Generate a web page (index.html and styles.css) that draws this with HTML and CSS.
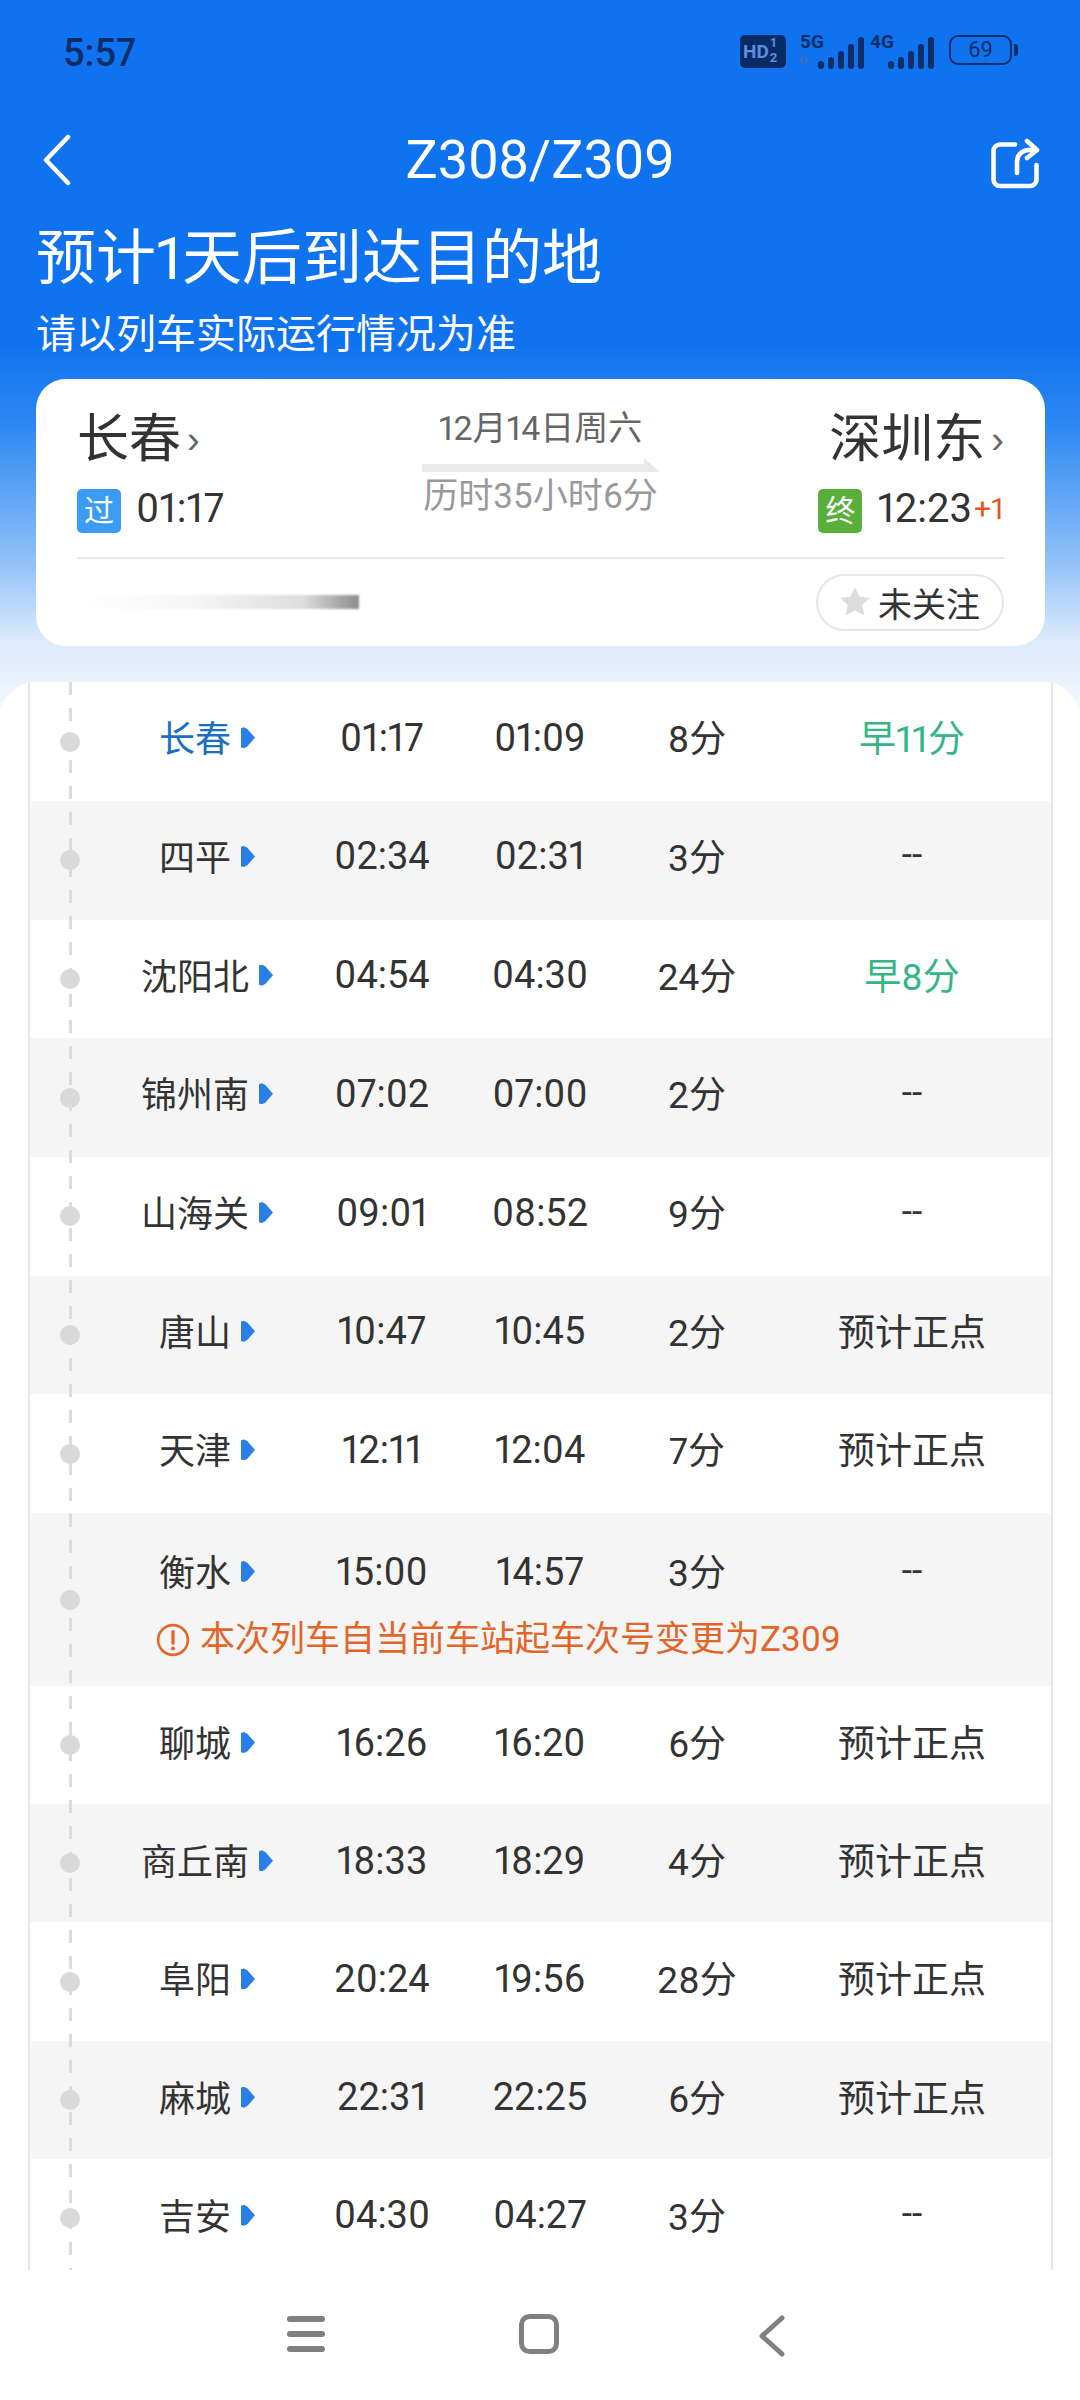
FILE: index.html
```html
<!DOCTYPE html>
<html lang="zh">
<head>
<meta charset="utf-8">
<title>Z308/Z309</title>
<link rel="stylesheet" href="styles.css">
</head>
<body>
<div class="page">
  <header class="hero">
    <div class="status">
      <span class="clock">5:57</span>
      <div class="sys">
        <span class="hd">HD<span class="hd-n"><i>1</i><i>2</i></span></span>
        <span class="net"><b>5G</b><svg width="46" height="34" viewBox="0 0 46 34"><path d="M-15 21l-5 4 5 4zM-13 21l5 4-5 4z" fill="#3f6fc0"/><path d="M3 29v2M13 25v6M23 19v12M33 12v19M43 5v26" class="bars"/></svg></span>
        <span class="net"><b>4G</b><svg width="46" height="34" viewBox="0 0 46 34"><path d="M3 29v2M13 25v6M23 19v12M33 12v19M43 5v26" class="bars"/></svg></span>
        <span class="batt"><span class="batt-b">69</span><span class="batt-n"></span></span>
      </div>
    </div>
    <nav class="bar">
      <svg class="back" width="34" height="52" viewBox="0 0 34 52"><path d="M29 3 7 26l22 23" fill="none" stroke="#fff" stroke-width="4.5" stroke-linecap="round" stroke-linejoin="round"/></svg>
      <h1 class="title">Z308/Z309</h1>
      <svg class="share" width="52" height="60" viewBox="0 0 52 60"><path d="M26 14.5H11a6.5 6.5 0 0 0-6.5 6.5v28.5a6.5 6.5 0 0 0 6.5 6.5h30a6.5 6.5 0 0 0 6.5-6.5V35" fill="none" stroke="#fff" stroke-width="4.6" stroke-linecap="round"/><path d="M28 43V32c0-7 5-12 12-12h7M38 11l10 9-10 8" fill="none" stroke="#fff" stroke-width="4.6" stroke-linecap="round" stroke-linejoin="round"/></svg>
    </nav>
    <h2 class="eta">预计1天后到达目的地</h2>
    <p class="hint">请以列车实际运行情况为准</p>
    <section class="card">
      <div class="route">
        <div class="end">
          <div class="city">长春<span class="chev">›</span></div>
          <div class="at"><span class="tag tag-pass">过</span><span class="tm">01:17</span></div>
        </div>
        <div class="mid">
          <div class="date">12月14日周六</div>
          <svg class="arrow" width="238" height="14" viewBox="0 0 238 14"><path d="M0 6h222V0l16 14H0z" fill="#e9e9e9"/></svg>
          <div class="dur">历时35小时6分</div>
        </div>
        <div class="end end-r">
          <div class="city">深圳东<span class="chev">›</span></div>
          <div class="at"><span class="tag tag-end">终</span><span class="tm">12:23</span><span class="plus">+1</span></div>
        </div>
      </div>
      <div class="foot">
        <div class="smear"></div>
        <div class="pill"><svg width="34" height="34" viewBox="0 0 24 24"><path d="M12 1.5l3.2 6.8 7.3.9-5.4 5 1.5 7.3-6.6-3.7-6.6 3.7 1.5-7.3-5.4-5 7.3-.9z" fill="#dcdcdc"/></svg><span>未关注</span></div>
      </div>
    </section>
  </header>

  <main class="sheet">
    <div class="table">
      <div class="row"><span class="node"></span><div class="cells"><span class="stn cur">长春<i class="tri"></i></span><span>01:17</span><span>01:09</span><span>8分</span><span class="early">早11分</span></div></div>
      <div class="row alt"><span class="node"></span><div class="cells"><span class="stn">四平<i class="tri"></i></span><span>02:34</span><span>02:31</span><span>3分</span><span>--</span></div></div>
      <div class="row"><span class="node"></span><div class="cells"><span class="stn">沈阳北<i class="tri"></i></span><span>04:54</span><span>04:30</span><span>24分</span><span class="early">早8分</span></div></div>
      <div class="row alt"><span class="node"></span><div class="cells"><span class="stn">锦州南<i class="tri"></i></span><span>07:02</span><span>07:00</span><span>2分</span><span>--</span></div></div>
      <div class="row"><span class="node"></span><div class="cells"><span class="stn">山海关<i class="tri"></i></span><span>09:01</span><span>08:52</span><span>9分</span><span>--</span></div></div>
      <div class="row alt"><span class="node"></span><div class="cells"><span class="stn">唐山<i class="tri"></i></span><span>10:47</span><span>10:45</span><span>2分</span><span>预计正点</span></div></div>
      <div class="row"><span class="node"></span><div class="cells"><span class="stn">天津<i class="tri"></i></span><span>12:11</span><span>12:04</span><span>7分</span><span>预计正点</span></div></div>
      <div class="row alt row-note"><span class="node"></span><div class="cells"><span class="stn">衡水<i class="tri"></i></span><span>15:00</span><span>14:57</span><span>3分</span><span>--</span></div>
        <div class="note"><svg width="34" height="34" viewBox="0 0 32 32"><circle cx="16" cy="16" r="14" fill="none" stroke="#e2662a" stroke-width="2.4"/><path d="M16 8v11" stroke="#e2662a" stroke-width="3" stroke-linecap="round"/><circle cx="16" cy="24" r="1.9" fill="#e2662a"/></svg><span>本次列车自当前车站起车次号变更为Z309</span></div>
      </div>
      <div class="row"><span class="node"></span><div class="cells"><span class="stn">聊城<i class="tri"></i></span><span>16:26</span><span>16:20</span><span>6分</span><span>预计正点</span></div></div>
      <div class="row alt"><span class="node"></span><div class="cells"><span class="stn">商丘南<i class="tri"></i></span><span>18:33</span><span>18:29</span><span>4分</span><span>预计正点</span></div></div>
      <div class="row"><span class="node"></span><div class="cells"><span class="stn">阜阳<i class="tri"></i></span><span>20:24</span><span>19:56</span><span>28分</span><span>预计正点</span></div></div>
      <div class="row alt"><span class="node"></span><div class="cells"><span class="stn">麻城<i class="tri"></i></span><span>22:31</span><span>22:25</span><span>6分</span><span>预计正点</span></div></div>
      <div class="row"><span class="node"></span><div class="cells"><span class="stn">吉安<i class="tri"></i></span><span>04:30</span><span>04:27</span><span>3分</span><span>--</span></div></div>
    </div>
  </main>

  <footer class="navbar">
    <svg width="40" height="40" viewBox="0 0 40 40"><path d="M4 5h32M4 20h32M4 35h32" stroke="#808080" stroke-width="6" stroke-linecap="round"/></svg>
    <svg width="40" height="40" viewBox="0 0 40 40"><rect x="2.5" y="2.5" width="35" height="35" rx="8" fill="none" stroke="#808080" stroke-width="5"/></svg>
    <svg width="40" height="44" viewBox="0 0 40 44"><path d="M30 4 10 22l20 18" fill="none" stroke="#808080" stroke-width="5" stroke-linecap="round" stroke-linejoin="round"/></svg>
  </footer>
</div>
</body>
</html>
```
FILE: styles.css
```css
* { box-sizing: border-box; }
html, body { margin: 0; padding: 0; }
body {
  width: 1080px;
  height: 2400px;
  overflow: hidden;
  background: #fff;
  font-family: Roboto, "Noto Sans CJK SC", sans-serif;
  font-variant-numeric: proportional-nums;
  color: #333;
}
.page {
  width: 1080px;
  height: 2400px;
  display: flex;
  flex-direction: column;
  overflow: hidden;
  background: linear-gradient(180deg, #0f72ee 0, #0f72ee 340px, #2a86f2 420px, #8fc0f8 560px, #dceafb 640px, #f0f6fd 700px, #fff 720px);
}
.hero {
  height: 682.3px;
  flex: none;
  padding: 0 35px 0 36px;
  color: #fff;
}
.status {
  height: 104px;
  margin-left: 27px;
  margin-right: 27px;
  padding-top: 30px;
  display: flex;
  justify-content: space-between;
  align-items: flex-start;
  color: #0c2d68;
}
.clock {
  font-size: 38px;
  font-weight: 500;
  line-height: 46px;
}
.sys {
  display: flex;
  align-items: flex-start;
  padding-top: 5px;
  gap: 6px;
}
.hd {
  width: 46px;
  height: 33px;
  border-radius: 5px;
  background: #0a2a66;
  color: #5b8fe0;
  font: 700 19px/33px Roboto, sans-serif;
  padding-left: 3px;
  margin-right: 8px;
  display: flex;
}
.hd-n {
  display: flex;
  flex-direction: column;
  font-size: 13px;
  line-height: 15px;
  margin-left: 1px;
}
.hd-n i { font-style: normal; }
.net {
  position: relative;
  width: 64px;
  height: 34px;
  display: flex;
  justify-content: flex-end;
}
.net svg { overflow: visible; }
.net b {
  position: absolute;
  left: 0;
  top: -4px;
  font: 700 19px/22px Roboto, sans-serif;
  color: #0c2d68;
}
.bars { stroke: #0c2d68; stroke-width: 6; fill: none; stroke-linecap: round; }
.batt {
  display: flex;
  align-items: center;
  margin-left: 9px;
  height: 30px;
  gap: 2px;
}
.batt-b {
  width: 63px;
  height: 30px;
  border: 2.5px solid #0c2d68;
  border-radius: 9px;
  font: 400 22px/25px Roboto, sans-serif;
  text-align: center;
  color: #0c2d68;
}
.batt-n {
  width: 4px;
  height: 12px;
  border-radius: 0 3px 3px 0;
  background: #0c2d68;
}
.bar {
  height: 111px;
  margin-left: 3px;
  margin-right: 4px;
  display: flex;
  align-items: center;
  justify-content: space-between;
  position: relative;
}
.title {
  position: absolute;
  left: 0;
  right: 0;
  margin: 0;
  text-align: center;
  font: 400 54px/60px Roboto, sans-serif;
  color: #fff;
  pointer-events: none;
}
.eta {
  margin: 0;
  padding-top: 4px;
  font-size: 60px;
  font-weight: 400;
  line-height: 80px;
  height: 91px;
}
.hint {
  margin: 0;
  font-size: 40px;
  line-height: 58px;
  height: 58px;
}
.card {
  margin-top: 15px;
  height: 267px;
  background: #fff;
  border-radius: 30px;
  padding: 0 41px;
  color: #333;
}
.route {
  height: 180px;
  display: grid;
  grid-template-columns: 1fr auto 1fr;
  border-bottom: 2px solid #e8e8e8;
}
.end { padding-top: 29px; }
.end-r { display: flex; flex-direction: column; align-items: flex-end; }
.city {
  font-size: 52px;
  line-height: 64px;
  display: flex;
  align-items: center;
}
.chev {
  font-family: "Liberation Sans", sans-serif;
  color: #666;
  font-size: 38px;
  line-height: 44px;
  margin-left: 6px;
}
.at {
  margin-top: 16px;
  display: flex;
  align-items: center;
  height: 46px;
}
.tag {
  width: 44px;
  height: 44px;
  border-radius: 5px;
  color: #fff;
  font-size: 30px;
  line-height: 44px;
  text-align: center;
  margin-right: 15px;
}
.tag-pass { background: #3b9cf5; }
.tag-end { background: #58b03b; }
.tm {
  font-size: 40px;
  font-weight: 400;
  line-height: 40px;
  margin-bottom: 5px;
  color: #333;
}
.plus {
  font-size: 30px;
  line-height: 30px;
  margin-bottom: 5px;
  color: #e6561c;
  margin-left: 2px;
}
.mid {
  display: flex;
  flex-direction: column;
  align-items: center;
  padding-top: 26px;
}
.date {
  font-size: 34px;
  line-height: 46px;
  color: #666;
}
.arrow { margin-top: 7px; }
.dur {
  font-size: 35px;
  line-height: 46px;
  color: #999;
  margin-top: 2px;
}
.foot {
  display: flex;
  justify-content: space-between;
  align-items: center;
  height: 85px;
  padding-top: 1px;
}
.smear {
  width: 282px;
  height: 14px;
  background: linear-gradient(90deg, #fff 0, #f6f6f6 40%, #dddddd 80%, #8c8c8c 100%);
  filter: blur(1px);
}
.pill {
  width: 188px;
  height: 57px;
  border: 2px solid #e6e6e6;
  border-radius: 29px;
  display: flex;
  align-items: center;
  padding-left: 20px;
  gap: 6px;
  font-size: 34px;
  color: #333;
}
.sheet {
  flex: 1;
  min-height: 0;
  overflow: hidden;
  background: #fff;
  border-radius: 36px 36px 0 0;
  padding: 0 27px 0 28px;
}
.table {
  position: relative;
  height: 100%;
  overflow: hidden;
  border-left: 2px solid #e6e6e6;
  border-right: 2px solid #e6e6e6;
}
.table::before {
  content: "";
  position: absolute;
  z-index: 2;
  left: 38.5px;
  top: 0;
  bottom: 0;
  width: 3px;
  background: repeating-linear-gradient(180deg, #dcdcdc 0 13px, transparent 13px 26px);
}
.row {
  position: relative;
  height: 118.7px;
}
.alt { background: #f5f5f5; }
.row-note { height: 173px; padding-top: 3px; }
.node {
  position: absolute;
  z-index: 3;
  left: 30px;
  top: 50%;
  margin-top: -10px;
  width: 20px;
  height: 20px;
  border-radius: 50%;
  background: #d9d9d9;
}
.cells {
  height: 108px;
  padding-left: 84px;
  display: grid;
  grid-template-columns: 186px 164px 152px 162px 268px;
  align-items: center;
  justify-items: center;
  font-size: 37px;
  color: #333;
}
.row-note ~ .row { height: 118.2px; }
.row-note ~ .row .cells { height: 110px; }
.cells span:nth-child(2), .cells span:nth-child(3) { font-size: 38px; padding-top: 3px; }
.stn { display: flex; align-items: center; font-size: 36px; }
.cur { color: #1a6fc0; }
.tri {
  width: 14px;
  height: 21px;
  margin-left: 10px;
  margin-top: 3px;
  background: #2a7fe6;
  clip-path: polygon(0 4%, 20% 0, 45% 8%, 100% 50%, 45% 92%, 20% 100%, 0 96%);
}
.early { color: #35b585; }
.note {
  display: flex;
  align-items: center;
  gap: 10px;
  padding-left: 126px;
  margin-top: -7px;
  font-size: 35px;
  line-height: 46px;
  color: #e2662a;
}
.navbar {
  height: 130px;
  flex: none;
  display: flex;
  background: #fff;
  padding: 44px 0 0 286px;
  gap: 193px;
  align-items: flex-start;
}
```
